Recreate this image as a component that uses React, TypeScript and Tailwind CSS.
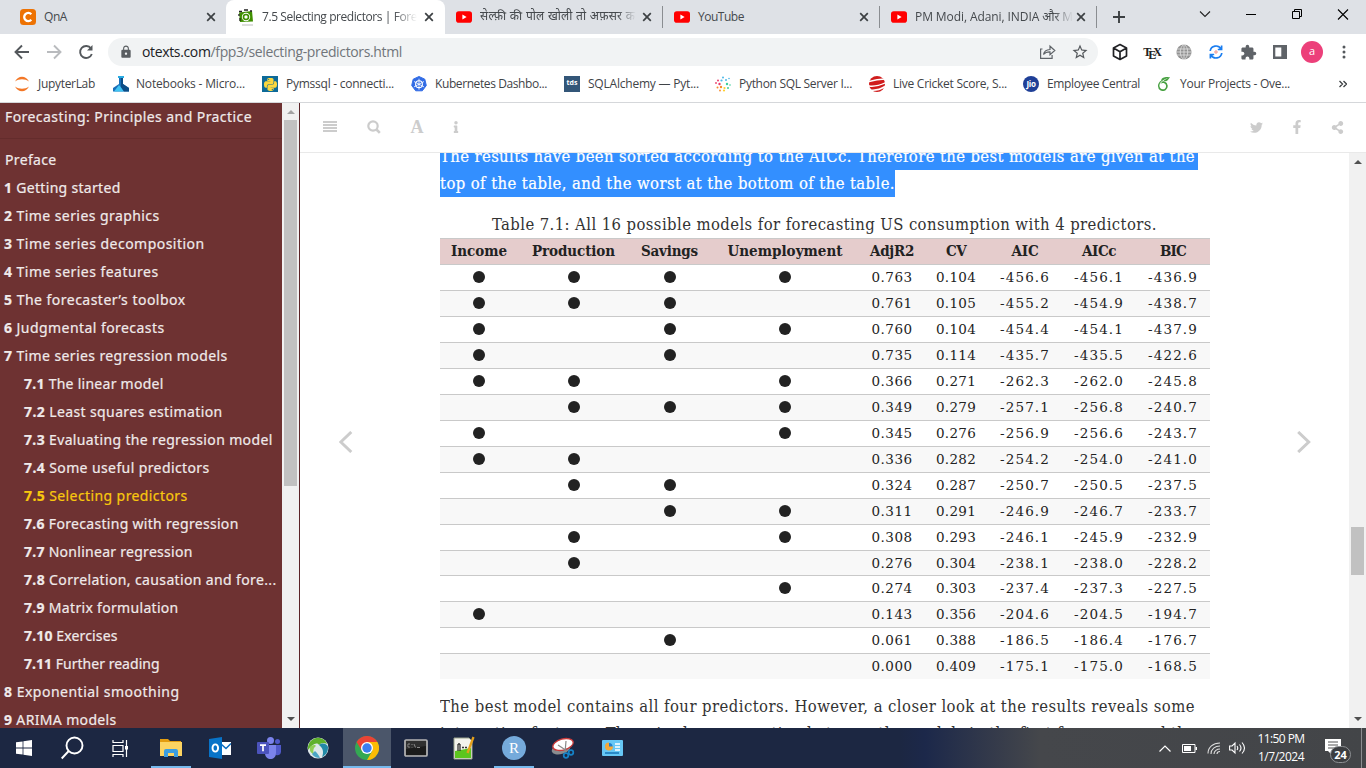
import React, { useLayoutEffect, useRef, useState } from "react";
import { FaTwitter, FaFacebookF, FaShareAlt, FaInfo, FaPython } from "react-icons/fa";
import { MdLock, MdExtension, MdStarBorder } from "react-icons/md";
import { SiKubernetes, SiOverleaf } from "react-icons/si";

const serif = "font-['DejaVu_Serif_Condensed','DejaVu_Serif',serif]";
const ui = "font-['Open_Sans','Noto_Sans',sans-serif]";

/* Text run tracked so that it fills a given width. */
function Fit({ w, children, className = "" }: { w: number; children: React.ReactNode; className?: string }) {
  const ref = useRef<HTMLSpanElement>(null);
  const [ls, setLs] = useState(0);
  useLayoutEffect(() => {
    const el = ref.current;
    if (!el) return;
    const n = (el.textContent || "").length || 1;
    setLs((w - el.getBoundingClientRect().width) / n);
  }, [w]);
  return (
    <span ref={ref} className={"inline-block whitespace-pre " + className} style={{ letterSpacing: `${ls}px` }}>
      {children}
    </span>
  );
}

function YT() {
  return (
    <svg width="16" height="16" viewBox="0 0 16 16" className="shrink-0">
      <rect x="0" y="2.3" width="16" height="11.4" rx="2.8" fill="#f00" />
      <path d="M6.4 5.6 10.6 8l-4.2 2.4z" fill="#fff" />
    </svg>
  );
}

function X({ c = "#3c4043" }: { c?: string }) {
  return (
    <svg width="10" height="10" viewBox="0 0 10 10" className="shrink-0">
      <path d="M1.2 1.2l7.6 7.6M8.8 1.2 1.2 8.8" stroke={c} strokeWidth="1.7" />
    </svg>
  );
}

function TabStrip() {
  return (
    <div className={"flex h-[34px] bg-[#dee1e6] text-[12px] text-[#45494d] " + ui}>
      <div className="flex w-[226px] items-center pl-5 pr-[10px]">
        <svg width="16" height="16" viewBox="0 0 16 16">
          <rect width="16" height="16" rx="3.5" fill="#ed7203" />
          <path d="M11.3 5.2A4.1 4.1 0 1 0 11.3 10.8" fill="none" stroke="#fff" strokeWidth="2.3" />
        </svg>
        <Fit w={23} className="ml-2">QnA</Fit>
        <span className="ml-auto"><X /></span>
      </div>
      <div className="flex w-[219px] items-center rounded-t-lg bg-white pl-3 pr-[11px]">
        <svg width="16" height="17" viewBox="0 0 16 17" className="shrink-0">
          <path d="M1 3.5 14 2l1 10.5L2 13z" fill="#3f8f00" />
          <path d="M1 2.5h3M6 1h4M12 2h2M1 5v2M2 9v3" stroke="#222" strokeWidth="1.3" />
          <circle cx="8" cy="8" r="4.2" fill="#fff" />
          <circle cx="8" cy="8" r="2.5" fill="none" stroke="#3f8f00" strokeWidth="1.6" />
          <path d="M4 16h11" stroke="#bbb" />
        </svg>
        <div className="ml-2 w-[155px] overflow-hidden [mask-image:linear-gradient(90deg,#000_85%,transparent)]">
          <Fit w={155}>7.5 Selecting predictors | Fore</Fit>
        </div>
        <span className="ml-auto"><X /></span>
      </div>
      <div className="flex w-[218px] items-center border-r pl-[11px] pr-[10px] [border-image:linear-gradient(transparent_20%,#8a8d91_20%,#8a8d91_80%,transparent_80%)_1]">
        <YT />
        <div className="ml-2 w-[156px] overflow-hidden font-['Noto_Sans_Devanagari','Noto_Sans','Open_Sans',sans-serif] [mask-image:linear-gradient(90deg,#000_88%,transparent)]">
          <Fit w={158}>सेल्फ़ी की पोल खोली तो अफ़सर क</Fit>
        </div>
        <span className="ml-auto"><X /></span>
      </div>
      <div className="flex w-[217px] items-center border-r pl-[11px] pr-[10px] [border-image:linear-gradient(transparent_20%,#8a8d91_20%,#8a8d91_80%,transparent_80%)_1]">
        <YT />
        <Fit w={46} className="ml-2">YouTube</Fit>
        <span className="ml-auto"><X /></span>
      </div>
      <div className="flex w-[217px] items-center border-r pl-[11px] pr-[10px] [border-image:linear-gradient(transparent_20%,#8a8d91_20%,#8a8d91_80%,transparent_80%)_1]">
        <YT />
        <div className="ml-2 w-[158px] overflow-hidden [mask-image:linear-gradient(90deg,#000_88%,transparent)]">
          <Fit w={158}>PM Modi, Adani, INDIA और M</Fit>
        </div>
        <span className="ml-auto"><X /></span>
      </div>
      <svg width="269" height="34" viewBox="0 0 269 34" fill="none">
        <path d="M16 17h12M22 11v12" stroke="#3c4043" strokeWidth="1.9" />
        <path d="M103 11.5l5 5 5-5" stroke="#222" strokeWidth="1.1" />
        <path d="M149 14.5h10" stroke="#000" />
        <path d="M195.500 11.500h7v7h-7zM197.500 11.500v-2h7v7h-2" stroke="#000" />
        <path d="M241 9.500l10 10M251 9.500l-10 10" stroke="#000" strokeWidth="1.1" />
      </svg>
    </div>
  );
}

function Toolbar() {
  return (
    <div className={"flex h-[36px] items-center bg-white " + ui}>
      <svg width="108" height="36" viewBox="0 0 108 36" fill="none" strokeWidth="1.9">
        <path d="M29 18H16M22 11.500 15.500 18l6.500 6.500" stroke="#54585c" />
        <path d="M47 18h13M54 11.500 60.500 18 54 24.500" stroke="#b9bbbe" />
        <path d="M91 14.500A6 6 0 1 0 91.800 20" stroke="#54585c" />
        <path d="M92.500 11v5.500H87z" fill="#54585c" />
      </svg>
      <div className="flex h-7 w-[990px] items-center rounded-full bg-[#f1f3f4] pl-[11px]">
        <MdLock size={14} color="#5a5e62" />
        <span className="ml-[9px] pb-[2px] text-[14px] text-[#70757a]">
          <Fit w={260}><span className="text-[#202124]">otexts.com</span>/fpp3/selecting-predictors.html</Fit>
        </span>
        <svg width="18" height="16" viewBox="0 0 18 16" fill="none" stroke="#5f6368" strokeWidth="1.2" className="ml-auto">
          <path d="M3.500 5H1.600v9.400h11.500V11M4.500 10.500c.6-3.300 3-4.800 6.500-5V2.200l4.800 4.300-4.800 4.200V7.800c-3-.1-5 .8-6.500 2.700z" />
        </svg>
        <MdStarBorder size={18} color="#54585c" className="mr-[9px] ml-[14px]" />
      </div>
      <div className="flex items-center pl-[6px]">
        <span className="flex w-8 justify-center">
          <svg width="16" height="18" viewBox="0 0 16 18" fill="none" stroke="#202124" strokeWidth="1.7" strokeLinejoin="round">
            <path d="M8 1.500 14.500 5v8L8 16.500 1.500 13V5zM1.500 5 8 8.700 14.500 5M8 8.700v7.800" />
          </svg>
        </span>
        <span className="flex w-8 -translate-x-px items-center justify-center font-['Liberation_Serif',serif] text-[12px] font-bold tracking-[-3px] text-[#222]">
          <span>T</span><span className="translate-y-[3px]">E</span><span>X</span>
        </span>
        <span className="flex w-8 justify-center">
          <svg width="16" height="16" viewBox="0 0 16 16">
            <circle cx="8" cy="8" r="7.600" fill="#939393" />
            <path d="M1 5h14M0 8h16M1 11h14M8 0v16M8 0C3 4 3 12 8 16M8 0c5 4 5 12 0 16" stroke="#e3e3e3" strokeWidth=".8" fill="none" />
          </svg>
        </span>
        <span className="flex w-8 justify-center">
          <svg width="14" height="14" viewBox="0 0 14 14" fill="none" stroke="#1a7df0" strokeWidth="1.700">
            <path d="M1.200 6A5.800 5.800 0 0 1 12 4M12.800 8A5.800 5.800 0 0 1 2 10M12.600.500v4H8.800M1.400 13.500v-4h3.800" />
            <circle cx="7" cy="7" r="1.200" stroke="#f28b82" strokeWidth="1" />
          </svg>
        </span>
        <span className="flex w-8 justify-center"><MdExtension size={17} color="#5f6368" /></span>
        <span className="flex w-8 justify-center">
          <svg width="14" height="14" viewBox="0 0 14 14"><path d="M0 0h14v14H0zM2.300 2.500v9h6v-9z" fill="#5f6368" fillRule="evenodd" /></svg>
        </span>
        <span className="flex w-8 justify-center">
          <span className="flex h-[22px] w-[22px] items-center justify-center rounded-full bg-[#ec407a] pb-px text-[11px] text-white">a</span>
        </span>
        <span className="flex w-8 justify-center">
          <svg width="4" height="14" viewBox="0 0 4 14" fill="#54585c"><circle cx="2" cy="2" r="1.500" /><circle cx="2" cy="7" r="1.500" /><circle cx="2" cy="12" r="1.500" /></svg>
        </span>
      </div>
    </div>
  );
}

const marks: { cell: string; text: string; w: number; icon: React.ReactNode }[] = [
  { cell: "w-[99px]", text: "JupyterLab", w: 57, icon: (
    <svg width="16" height="16" viewBox="0 0 16 16"><path d="M1 5.500C4-.8 12-.8 15 5.500 11 2.500 5 2.500 1 5.500zM1 10.500c3 6.300 11 6.300 14 0-4 3-10 3-14 0z" fill="#f37726" /></svg>) },
  { cell: "w-[149px]", text: "Notebooks - Micro...", w: 109, icon: (
    <svg width="16" height="16" viewBox="0 0 16 16"><path d="M5 0h6v2H5z" fill="#29abe2" /><path d="M6 2h4v6l6 4v3.500H0V12l6-4z" fill="#1a6fb8" /><path d="M6 9 1 15.500h10L8 11.500z" fill="#40c4f3" /><path d="M8 2h2v6l6 4v3.500h-5L8 11z" fill="#0b4d86" /></svg>) },
  { cell: "w-[149px]", text: "Pymssql - connecti...", w: 108, icon: (
    <span className="flex h-4 w-4 items-center justify-center bg-[#0d6a98]"><FaPython size={15} color="#fcd73d" /></span>) },
  { cell: "w-[153px]", text: "Kubernetes Dashbo...", w: 112, icon: (
    <svg width="16" height="16" viewBox="0 0 16 16"><path d="M8 .5 13.800 3.200 15.300 9.500 11.300 14.800H4.700L.7 9.500 2.200 3.200z" fill="#326ce5" stroke="#326ce5" strokeLinejoin="round" /><circle cx="8" cy="8.200" r="3.400" fill="none" stroke="#fff" strokeWidth="1.100" /><path d="M8 2.700v11M3 5.500l10 5.400M13 5.500 3 10.900" stroke="#fff" strokeWidth=".8" /></svg>) },
  { cell: "w-[151px]", text: "SQLAlchemy — Pyt...", w: 111, icon: (
    <span className="flex h-4 w-4 items-center justify-center bg-[#335678] pb-px text-[7px] font-bold text-white">tds</span>) },
  { cell: "w-[154px]", text: "Python SQL Server I...", w: 113, icon: (
    <svg width="16" height="16" viewBox="0 0 16 16">
      <g fill="#4bb8e8"><circle cx="8" cy="1.500" r="1" /><circle cx="6.500" cy="4.500" r="1.100" /><circle cx="11" cy="4" r="1" /><circle cx="14" cy="2.500" r=".8" /></g>
      <g fill="#ea3d6c"><circle cx="3" cy="4.500" r="1" /><circle cx="1" cy="7" r=".9" /><circle cx="4.500" cy="8" r="1.200" /></g>
      <g fill="#f98a2b"><circle cx="2.500" cy="11.500" r="1" /><circle cx="6" cy="11" r="1.200" /><circle cx="5" cy="14.500" r=".9" /></g>
      <g fill="#ffd02e"><circle cx="9.500" cy="12" r="1.100" /><circle cx="9" cy="14.500" r="1.100" /></g>
      <g fill="#3ccf9b"><circle cx="12" cy="8" r="1.200" /><circle cx="15" cy="9" r=".8" /><circle cx="13" cy="12" r="1" /></g>
    </svg>) },
  { cell: "w-[154px]", text: "Live Cricket Score, S...", w: 114, icon: (
    <svg width="16" height="16" viewBox="0 0 16 16"><circle cx="8" cy="8" r="8" fill="#d01c1c" /><path d="M0 5.500q8-2 16-2.500M-1 9.800q8 1.500 18-3.300M1 14q8 1 15-3.500" stroke="#fff" strokeWidth="1.500" fill="none" /></svg>) },
  { cell: "w-[133px]", text: "Employee Central", w: 93, icon: (
    <span className="flex h-4 w-4 items-center justify-center rounded-full bg-[#1f3f97] text-[8px] font-bold tracking-[-0.3px] text-white">Jio</span>) },
  { cell: "w-[160px]", text: "Your Projects - Ove...", w: 110, icon: <SiOverleaf size={14} color="#47a141" className="mx-px" /> },
];

function Bookmarks() {
  return (
    <div className={"flex h-[33px] items-center border-b border-[#d5d7da] bg-white pl-[14px] pb-[4px] text-[12px] text-[#3f4347] " + ui}>
      {marks.map((m) => (
        <div key={m.text} className={"flex shrink-0 items-center " + m.cell}>
          {m.icon}
          <Fit w={m.w} className={(m.text[0] === "N" ? "ml-[7px]" : "ml-2") + " -mt-px"}>{m.text}</Fit>
        </div>
      ))}
      <svg width="8" height="8" viewBox="0 0 8 8" fill="none" stroke="#3c4043" strokeWidth="1.300" className="ml-auto mr-[19px]"><path d="M.500 1l3 3-3 3M4.500 1l3 3-3 3" /></svg>
    </div>
  );
}

const toc: [string, string, number][] = [
  ["", "Preface", 51],
  ["1", "Getting started", 116],
  ["2", "Time series graphics", 155],
  ["3", "Time series decomposition", 200],
  ["4", "Time series features", 154],
  ["5", "The forecaster’s toolbox", 181],
  ["6", "Judgmental forecasts", 160],
  ["7", "Time series regression models", 223],
  ["7.1", "The linear model", 139],
  ["7.2", "Least squares estimation", 198],
  ["7.3", "Evaluating the regression model", 248],
  ["7.4", "Some useful predictors", 185],
  ["7.5", "Selecting predictors", 163],
  ["7.6", "Forecasting with regression", 214],
  ["7.7", "Nonlinear regression", 168],
  ["7.8", "Correlation, causation and fore...", 252],
  ["7.9", "Matrix formulation", 154],
  ["7.10", "Exercises", 93],
  ["7.11", "Further reading", 135],
  ["8", "Exponential smoothing", 175],
  ["9", "ARIMA models", 112],
];

function Arrow({ up, c }: { up?: boolean; c: string }) {
  return (
    <svg width="8" height="4" viewBox="0 0 8 4"><path d={up ? "M0 4 4 0l4 4z" : "M0 0h8L4 4z"} fill={c} /></svg>
  );
}

function Sidebar() {
  return (
    <div className="flex w-[300px] shrink-0 border-r border-[#5c2428]">
      <div className="w-[282px] overflow-hidden bg-[#6e3232] font-['Noto_Sans',sans-serif] text-[14px] text-[#f0eaea] [-webkit-text-stroke:0.2px_currentColor]">
        <div className="mb-[7px] h-9 border-b border-[#642c2c] pl-[5px] leading-7">
          <Fit w={247}>Forecasting: Principles and Practice</Fit>
        </div>
        {toc.map(([n, t, w]) => (
          <div
            key={t}
            className={
              "h-7 leading-7 " +
              (n.includes(".") ? "pl-6 " : n ? "pl-1 " : "pl-[5px] ") +
              (n === "7.5" ? "text-[#f9c80e]" : "")
            }
          >
            <Fit w={w + 0.6}>{n && <b>{n} </b>}{t}</Fit>
          </div>
        ))}
      </div>
      <div className="flex w-[17px] flex-col items-center bg-[#f1f1f1] pt-[7px] pb-[7px]">
        <Arrow up c="#a3a3a3" />
        <div className="mt-[6px] mr-px h-[366px] w-[13px] bg-[#c1c1c1]" />
        <div className="mt-auto flex"><Arrow c="#505050" /></div>
      </div>
    </div>
  );
}

function PageHeader() {
  return (
    <div className="flex h-[50px] shrink-0 items-center justify-between border-b border-[#e9e9e9] text-[#ccc]">
      <div className="flex items-center pl-[23px] pb-px">
        <svg width="14" height="12" viewBox="0 0 14 12" fill="#ccc" shapeRendering="crispEdges"><path d="M0 0h14v2H0zM0 3h14v2H0zM0 6h14v2H0zM0 9h14v2H0z" /></svg>
        <svg width="14" height="14" viewBox="0 0 14 14" fill="none" stroke="#ccc" className="ml-[30px]"><circle cx="6" cy="6" r="4.700" strokeWidth="2.200" /><path d="M9.500 9.500l3.300 3.300" strokeWidth="2.600" /></svg>
        <span className="ml-[29px] w-[14px] text-center font-['Liberation_Serif',serif] text-[18px] leading-4 font-bold">A</span>
        <FaInfo size={12} className="ml-[26px]" />
      </div>
      <div className="flex items-center pr-[22px] pb-px">
        <FaTwitter size={13} />
        <FaFacebookF size={14} className="ml-[27px]" />
        <FaShareAlt size={13} className="ml-[27px]" />
      </div>
    </div>
  );
}

const rows: [string, string, string, string, string, string][] = [
  ["1111", "0.763", "0.104", "-456.6", "-456.1", "-436.9"],
  ["1110", "0.761", "0.105", "-455.2", "-454.9", "-438.7"],
  ["1011", "0.760", "0.104", "-454.4", "-454.1", "-437.9"],
  ["1010", "0.735", "0.114", "-435.7", "-435.5", "-422.6"],
  ["1101", "0.366", "0.271", "-262.3", "-262.0", "-245.8"],
  ["0111", "0.349", "0.279", "-257.1", "-256.8", "-240.7"],
  ["1001", "0.345", "0.276", "-256.9", "-256.6", "-243.7"],
  ["1100", "0.336", "0.282", "-254.2", "-254.0", "-241.0"],
  ["0110", "0.324", "0.287", "-250.7", "-250.5", "-237.5"],
  ["0011", "0.311", "0.291", "-246.9", "-246.7", "-233.7"],
  ["0101", "0.308", "0.293", "-246.1", "-245.9", "-232.9"],
  ["0100", "0.276", "0.304", "-238.1", "-238.0", "-228.2"],
  ["0001", "0.274", "0.303", "-237.4", "-237.3", "-227.5"],
  ["1000", "0.143", "0.356", "-204.6", "-204.5", "-194.7"],
  ["0010", "0.061", "0.388", "-186.5", "-186.4", "-176.7"],
  ["0000", "0.000", "0.409", "-175.1", "-175.0", "-168.5"],
];
const heads: [string, number][] = [
  ["Income", 56], ["Production", 83], ["Savings", 57], ["Unemployment", 115],
  ["AdjR2", 44], ["CV", 20], ["AIC", 27], ["AICc", 34], ["BIC", 26],
];
const cols = "grid grid-cols-[78px_111px_81px_150px_64px_64px_74px_74px_74px] items-center justify-items-center border-t border-[#c9c9c9] ";

function Article() {
  return (
    <div className={"w-[770px] shrink-0 text-[16.5px] text-[#333] " + serif}>
      <div className="-mt-[10px] h-[27px] w-[758px] bg-[#338fff] leading-[27px] text-white [-webkit-text-stroke:0.2px_currentColor]">
        <Fit w={755}>The results have been sorted according to the AICc. Therefore the best models are given at the</Fit>
      </div>
      <div className="h-[27px] w-[455px] bg-[#338fff] leading-[27px] text-white [-webkit-text-stroke:0.2px_currentColor]">
        <Fit w={455}>top of the table, and the worst at the bottom of the table.</Fit>
      </div>
      <div className="mt-[14px] h-[27px] pr-px text-center leading-[27px]">
        <Fit w={665}>Table 7.1: All 16 possible models for forecasting US consumption with 4 predictors.</Fit>
      </div>
      <div className={cols + "h-[26px] bg-[#e5cccc] text-[15px] font-bold text-[#222]"}>
        {heads.map(([h, w]) => <Fit key={h} w={w}>{h}</Fit>)}
      </div>
      {rows.map((r, i) => (
        <div key={r[3]} className={cols + "font-['DejaVu_Serif',serif] text-[13.5px] text-[#222] " + (i === 11 ? "h-[25px] " : "h-[26px] ") + (i % 2 ? "bg-[#f8f8f8]" : "bg-white")}>
          {r[0].split("").map((d, j) =>
            d === "1" ? <span key={j} className="mb-px h-3 w-3 rounded-full bg-[#222]" /> : <span key={j} />
          )}
          {r.slice(1).map((v, j) => <Fit key={j} w={j === 0 ? 41 : j === 1 ? 40 : 50}>{v}</Fit>)}
        </div>
      ))}
      <div className="mt-[14px] leading-[27px]">
        <div className="h-[27px]"><Fit w={755}>The best model contains all four predictors. However, a closer look at the results reveals some</Fit></div>
        <div className="h-[27px]"><Fit w={756}>interesting features. There is clear separation between the models in the first four rows and the</Fit></div>
      </div>
    </div>
  );
}

function Main() {
  return (
    <div className="flex min-w-0 flex-1 flex-col bg-white">
      <PageHeader />
      <div className="flex min-h-0 flex-1">
        <div className="w-[140px] shrink-0 pt-[278px] pl-[39px]">
          <svg width="14" height="22" viewBox="0 0 14 22" fill="none"><path d="M12.300 1 1.800 11l10.500 10" stroke="#ccc" strokeWidth="3" /></svg>
        </div>
        <div className="h-[575px] overflow-hidden"><div className="flow-root"><Article /></div></div>
        <div className="w-[139px] pt-[278px] pl-[87px]">
          <svg width="14" height="22" viewBox="0 0 14 22" fill="none"><path d="M1.200 1l10.500 10-10.500 10" stroke="#ccc" strokeWidth="3" /></svg>
        </div>
        <div className="flex w-[17px] shrink-0 flex-col items-center bg-[#f1f1f1] pt-[7px] pb-[7px]">
          <Arrow up c="#505050" />
          <div className="mt-[363px] h-12 w-[13px] bg-[#c1c1c1]" />
          <div className="mt-auto"><Arrow c="#505050" /></div>
        </div>
      </div>
    </div>
  );
}

const apps: { k: string; cell?: string; bar?: string; icon: React.ReactNode }[] = [
  { k: "start", icon: <svg width="16" height="16" viewBox="0 0 16 16" fill="#fff"><path d="M0 2.300 6.600 1.400v6.200H0zM7.400 1.300 16 0v7.600H7.400zM0 8.400h6.600v6.200L0 13.700zM7.400 8.400H16V16l-8.600-1.200z" /></svg> },
  { k: "search", icon: <svg width="24" height="24" viewBox="0 0 24 24" fill="none" stroke="#fff" strokeWidth="1.900"><circle cx="13.500" cy="9.500" r="8" /><path d="M7.700 15 .700 22.500" /></svg> },
  { k: "tasks", icon: <svg width="17" height="17" viewBox="0 0 17 17" fill="none" stroke="#fff" strokeWidth="1.200" className="mr-[3px]"><path d="M1 5.500h10v6H1zM1 0v2.500h10V0M1 17v-2.500h10V17M14.500 0v17" /><path d="M13 6h3v3.500h-3z" fill="#fff" stroke="none" /></svg> },
  { k: "files", bar: "w-10", icon: <svg width="22" height="20" viewBox="0 0 22 20"><path d="M0 1h8l2 2h11v6H0z" fill="#e39d10" /><path d="M0 4h22v14H0z" fill="#fcd462" /><path d="M4 19v-6q0-2 2-2h10q2 0 2 2v6h-4v-4H8v4z" fill="#3b9de0" /></svg> },
  { k: "outlook", icon: <svg width="22" height="22" viewBox="0 0 22 22"><path d="M12 5h10v13H12z" fill="#fff" /><path d="M12 7l5 4.500L22 6.500" fill="none" stroke="#0a6cc0" strokeWidth="1.500" /><path d="M0 2l13-2v22L0 20z" fill="#0873c8" /><ellipse cx="6.300" cy="11" rx="2.800" ry="3.600" fill="none" stroke="#fff" strokeWidth="1.900" /></svg> },
  { k: "teams", icon: <svg width="24" height="22" viewBox="0 0 24 22"><circle cx="20.500" cy="4.500" r="2.500" fill="#5059c9" /><circle cx="13.500" cy="3.500" r="3.500" fill="#7b83eb" /><path d="M17 8h7v7q-1 4-5 3z" fill="#5059c9" /><path d="M8 8h11v8c0 8-11 8-11 0z" fill="#7b83eb" /><rect y="5" width="12" height="12" rx="1" fill="#4b53bc" /><path d="M3 8.200h6M6 8.200v6" stroke="#fff" strokeWidth="1.700" /></svg> },
  { k: "globe", icon: <svg width="22" height="22" viewBox="0 0 22 22"><circle cx="11" cy="11" r="10.500" fill="#dfe8ea" /><path d="M1 13C0 5 7 0 13 1c4 1 6 3 7 6-4-2-6-1-8 1-2-3-7-1-11 5z" fill="#5fb12c" /><path d="M3 10c2-2 5-3 6-1-3 2-3 5-2 8-3 0-5-4-4-7z" fill="#8fcf56" /><path d="M12 8c4-3 8-1 9 2 0 5-2 8-6 10 2-5 1-9-3-12z" fill="#238aa7" /><path d="M8 14c2 2 4 4 5 7-3 0-6-1-8-4z" fill="#4aa5c4" /></svg> },
  { k: "chrome", cell: "bg-[#4b566a]", bar: "w-12", icon: <svg width="24" height="24" viewBox="0 0 24 24"><circle cx="12" cy="12" r="12" fill="#34a853" /><path d="M12 12 1.600 6A12 12 0 0 1 22.400 6z" fill="#ea4335" /><path d="M12 6h10.400A12 12 0 0 1 12 24l5.200-9z" fill="#fbbc05" /><path d="M1.600 6 7 15l5-9z" fill="#ea4335" /><circle cx="12" cy="12" r="6" fill="#fff" /><circle cx="12" cy="12" r="4.700" fill="#3b7ef0" /></svg> },
  { k: "cmd", icon: <svg width="24" height="18" viewBox="0 0 24 18"><rect x="1" y="1" width="22" height="16" rx="1" fill="#303030" stroke="#b5b5b5" strokeWidth="1.700" /><path d="M2 10 22 7v9H2z" fill="#1b1b1b" /><path d="M4 5h2M4 5v3h2M8 5v1M8 8v.5M10 5l1.500 3.500M13 8.500h3" stroke="#8a8a8a" /></svg> },
  { k: "notes", icon: <svg width="22" height="24" viewBox="0 0 22 24" className="mr-[2px]"><path d="M1 2h15l3 3v18H1z" fill="#f3f3ec" stroke="#9aa38c" /><path d="M2 15l16-3v10H2z" fill="#5cc51e" /><path d="M5 8v7M7 8v7M5 8h2M9 11.500h2M12 11.500h2" stroke="#333" strokeWidth="1.300" /><path d="M20.500 1l-6 16" stroke="#e6a11b" strokeWidth="2.300" /></svg> },
  { k: "r", bar: "w-10", icon: <span className="flex h-6 w-6 items-center justify-center rounded-full bg-[#75aadb] font-['Liberation_Serif',serif] text-[15px] text-white">R</span> },
  { k: "snip", icon: <svg width="24" height="22" viewBox="0 0 24 22"><ellipse cx="10" cy="12" rx="9.500" ry="5" fill="#898c90" transform="rotate(-15 10 12)" /><ellipse cx="12" cy="7.500" rx="10.500" ry="5.500" fill="#fff" stroke="#ca3a3a" strokeWidth="1.300" transform="rotate(-15 12 7.500)" /><path d="M7 8l9 6M15 4l-1 12" stroke="#888" strokeWidth="1.200" /><circle cx="15" cy="18.500" r="2.300" fill="none" stroke="#1583c8" strokeWidth="1.700" /><circle cx="20" cy="15.500" r="2.300" fill="none" stroke="#1583c8" strokeWidth="1.700" /></svg> },
  { k: "panel", icon: <svg width="21" height="16" viewBox="0 0 21 16"><rect width="21" height="16" rx="1" fill="#66c7f5" /><circle cx="7" cy="6.500" r="3.500" fill="#1d7fd0" /><path d="M7 6.500v-4a4 4 0 1 0 4 4z" fill="#f4a93a" /><path d="M13 4h5M13 7h5M13 10h5" stroke="#fff" strokeWidth="1.500" /><path d="M3 13h14" stroke="#1674b8" strokeWidth="1.500" /></svg> },
];

function Taskbar() {
  return (
    <div className="flex h-10 bg-[linear-gradient(90deg,#1c2742_0,#1c2742_900px,#1c284a_925px,#45474b_1040px,#434548_100%)]">
      {apps.map((a) => (
        <div key={a.k} className={"mr-px flex w-12 shrink-0 flex-col items-center " + (a.cell || "")}>
          <div className="flex h-[38px] w-full items-center justify-center pt-[2px]">{a.icon}</div>
          {a.bar && <div className={"h-[2px] bg-[#76b9ed] " + a.bar} />}
        </div>
      ))}
      <div className={"ml-auto flex items-center text-white " + ui}>
        <svg width="12" height="7" viewBox="0 0 12 7" fill="none" stroke="#fff" strokeWidth="1.200"><path d="M.500 6.500l5.500-5.500 5.500 5.500" /></svg>
        <svg width="15" height="9" viewBox="0 0 15 9" className="ml-[11px]"><path d="M.500.500h12.500v8H.500z" fill="none" stroke="#fff" /><path d="M2 2h7v5H2zM13.500 3H15v3h-1.500z" fill="#fff" /></svg>
        <svg width="14" height="13" viewBox="0 0 14 13" fill="none" stroke="#ddd" strokeWidth="1.100" className="ml-[10px]"><path d="M1 11.500C1 5 6 1 13 1M4 12C4 7 8 4 13 4M7 12c0-3 3-5 6-5M10 12c0-1.500 1.500-2.500 3-2.500" /></svg>
        <svg width="17" height="14" viewBox="0 0 17 14" fill="none" stroke="#fff" strokeWidth="1.100" className="ml-[8px]"><path d="M.600 5h2.500L6 2v10L3.100 9H.600zM8 5q1.500 2 0 4M10.500 3.500q3 3.500 0 7M13 1.500q5 5.500 0 11" /></svg>
        <div className="ml-[11px] w-[48px] text-center text-[12px] leading-[18px]">
          <Fit w={47}>11:50 PM</Fit>
          <Fit w={46}>1/7/2024</Fit>
        </div>
        <svg width="27" height="26" viewBox="0 0 27 26" className="ml-[20px] mt-[5px]">
          <path d="M0 1h16v12H7v4l-4-4H0z" fill="#fff" /><path d="M3 4h10M3 7h10M3 10h7" stroke="#555" />
          <rect x="5.500" y="8.500" width="20" height="16" rx="8" fill="#3b3d40" stroke="#8e9194" />
          <text x="15.500" y="20.500" textAnchor="middle" fontSize="11" fontWeight="700" fill="#fff">24</text>
        </svg>
        <div className="ml-[9px] mr-1 h-10 w-px bg-[#8b8d90]" />
      </div>
    </div>
  );
}

export default function App() {
  return (
    <div className="flex h-[768px] w-[1366px] flex-col overflow-hidden bg-white">
      <TabStrip />
      <Toolbar />
      <Bookmarks />
      <div className="flex h-[625px] shrink-0 overflow-hidden">
        <Sidebar />
        <Main />
      </div>
      <Taskbar />
    </div>
  );
}
